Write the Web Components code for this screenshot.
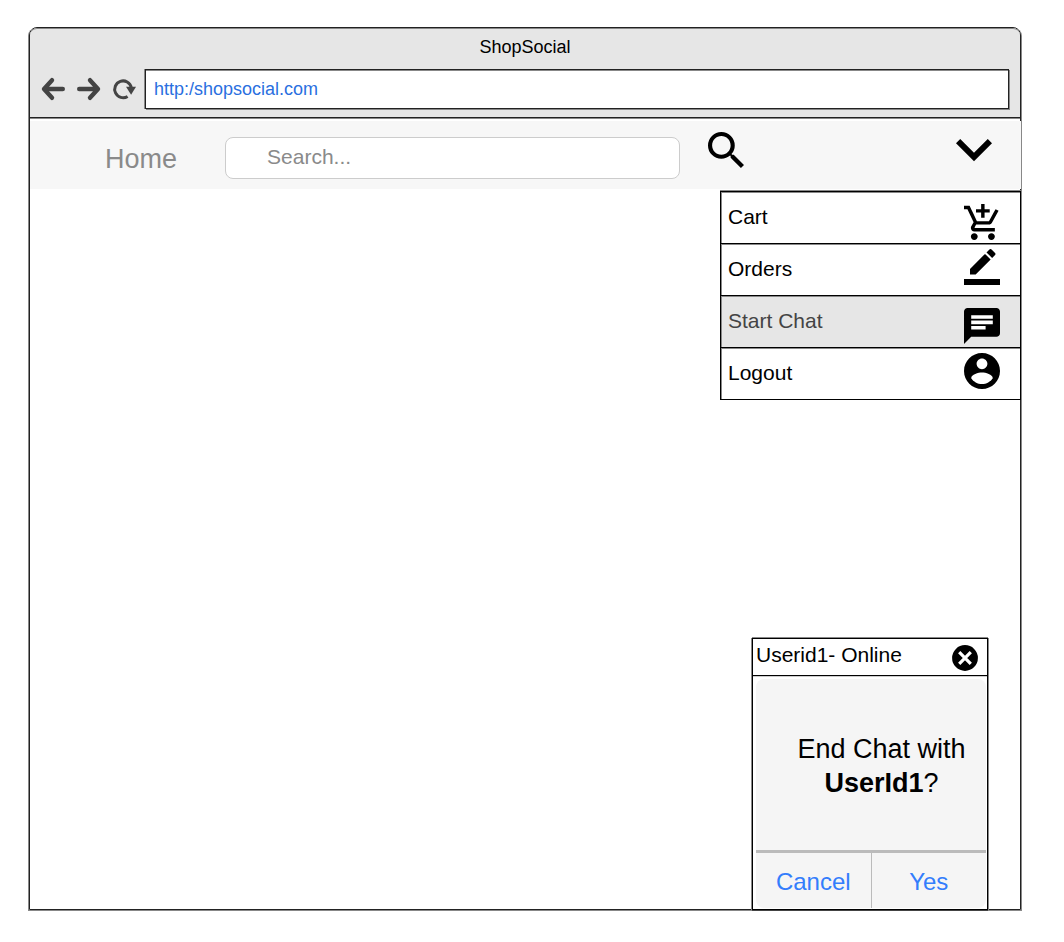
<!DOCTYPE html>
<html lang="en">
<head>
<meta charset="utf-8">
<meta name="viewport" content="width=device-width, initial-scale=1">
<title>ShopSocial</title>
<style>
  html { height: 100%; }
  body {
    margin: 0;
    min-height: 100%;
    box-sizing: border-box;
    padding: 27px 43px 32px 29px;
    display: flex;
    flex-direction: column;
    background: #fff;
    color: #000;
    font-family: "Liberation Sans", Arial, Helvetica, sans-serif;
    --ink: #222;
    --soft: #888;
  }
  browser-window { flex: 1; }
</style>
</head>
<body>
<browser-window heading="ShopSocial" address="http:/shopsocial.com">
  <site-nav></site-nav>
  <page-body>
    <account-menu>
      <menu-entry label="Cart" icon="cart" low></menu-entry>
      <menu-entry label="Orders" icon="edit"></menu-entry>
      <menu-entry label="Start Chat" icon="chat" low active></menu-entry>
      <menu-entry label="Logout" icon="user"></menu-entry>
    </account-menu>
    <chat-window heading="Userid1- Online">End Chat with <b>UserId1</b>?</chat-window>
  </page-body>
</browser-window>

<script>
const ICONS = {
  search: ['3 3 17.49 17.49', '<path d="M15.5 14h-.79l-.28-.27A6.47 6.47 0 0 0 16 9.5 6.5 6.5 0 1 0 9.5 16c1.61 0 3.09-.59 4.23-1.57l.27.28v.79l5 4.99L20.49 19l-4.99-5zm-6 0C7.01 14 5 11.99 5 9.5S7.01 5 9.5 5 14 7.01 14 9.5 11.99 14 9.5 14z"/>'],
  down: ['6 5.5 12 12', '<path d="M7.41 7.84L12 12.42l4.59-4.58L18 9.25l-6 6-6-6z"/>'],
  cart: ['1 1 21 21', '<path d="M11 9h2V6h3V4h-3V1h-2v3H8v2h3v3zm-4 9c-1.1 0-1.99.9-1.99 2S5.9 22 7 22s2-.9 2-2-.9-2-2-2zm10 0c-1.1 0-1.99.9-1.99 2s.89 2 1.99 2 2-.9 2-2-.9-2-2-2zm-9.83-3.25l.03-.12.9-1.63h7.45c.75 0 1.41-.41 1.75-1.03l3.86-7.01L19.42 4h-.01l-1.1 2-2.76 5H8.53l-.13-.27L6.16 6l-.95-2-.94-2H1v2h2l3.6 7.59-1.35 2.45c-.16.28-.25.61-.25.96 0 1.1.9 2 2 2h12v-2H7.42c-.13 0-.25-.11-.25-.25z"/>'],
  edit: ['0 0 24 24', '<path d="M17.75 7L14 3.25l-10 10V17h3.75l10-10zm2.96-2.96c.39-.39.39-1.02 0-1.41L18.37.29c-.39-.39-1.02-.39-1.41 0L15 2.25 18.75 6l1.96-1.96zM0 20h24v4H0z"/>'],
  chat: ['2 2 20 20', '<path fill="#fff" d="M5 5h14v10H5z"/><path d="M20 2H4c-1.1 0-1.99.9-1.99 2L2 22l4-4h14c1.1 0 2-.9 2-2V4c0-1.1-.9-2-2-2zM6 9h12v2H6V9zm8 5H6v-2h8v2zm4-6H6V6h12v2z"/>'],
  user: ['2 2 20 20', '<path d="M12 2C6.48 2 2 6.48 2 12s4.48 10 10 10 10-4.48 10-10S17.52 2 12 2zm0 3c1.66 0 3 1.34 3 3s-1.34 3-3 3-3-1.34-3-3 1.34-3 3-3zm0 14.2c-2.5 0-4.71-1.28-6-3.22.03-1.99 4-3.08 6-3.08 1.99 0 5.97 1.09 6 3.08-1.29 1.94-3.5 3.22-6 3.22z"/>'],
  close: ['0 0 26 26', '<circle cx="13" cy="13" r="12.9"/><path fill="none" stroke="#fff" stroke-width="3.2" d="M7.2 7.2l11.6 11.6M18.8 7.2L7.2 18.8"/>'],
  back: ['0 0 24 24', '<path fill="none" stroke="currentColor" stroke-width="4.4" stroke-linecap="round" stroke-linejoin="round" d="M11 3.2L3 12l8 8.8M4 12h17.8"/>'],
  forward: ['0 0 24 24', '<path fill="none" stroke="currentColor" stroke-width="4.4" stroke-linecap="round" stroke-linejoin="round" d="M13 3.2L21 12l-8 8.8M20 12H2.200"/>'],
  reload: ['0 0 24 24', '<path fill="none" stroke="currentColor" stroke-width="3" d="M15.6 19.4A8.4 8.4 0 1 1 19.3 10.5"/><path d="M14 9.8h10l-4.900 8z"/>']
};

class UiIcon extends HTMLElement {
  connectedCallback() {
    const [box, shape] = ICONS[this.getAttribute('name')];
    this.attachShadow({ mode: 'open' }).innerHTML = `
      <style>
        :host { display: block; flex: none; width: 36px; height: 36px; }
        svg { display: block; width: 100%; height: 100%; fill: currentColor; }
      </style>
      <svg viewBox="${box}" aria-hidden="true">${shape}</svg>`;
  }
}
customElements.define('ui-icon', UiIcon);

class BrowserWindow extends HTMLElement {
  connectedCallback() {
    this.attachShadow({ mode: 'open' }).innerHTML = `
      <style>
        :host {
          display: flex; flex-direction: column;
          border: 1px solid var(--ink);
          border-radius: 8px 8px 0 0;
          box-shadow: -1px 1px 0 var(--soft), 1px 1px 0 var(--soft);
        }
        header {
          padding: 8px 11px 8px 11px;
          background: #e6e6e6;
          border-top: 1px solid var(--soft);
          border-bottom: 1px solid var(--ink);
          border-radius: 7px 7px 0 0;
          box-shadow: 0 1px 0 var(--soft);
        }
        h1 { margin: 0 0 12px; font-size: 18px; line-height: 20px; font-weight: 400; text-align: center; }
        form { display: flex; align-items: center; }
        button {
          flex: none; margin: 0 12px 0 0; padding: 0; border: 0;
          background: none; color: #444;
        }
        button:nth-of-type(3) { margin-right: 9px; }
        button:nth-of-type(2) { margin-right: 11px; }
        button ui-icon { width: 24px; height: 24px; }
        input {
          flex: 1; min-width: 0; box-sizing: border-box; height: 40px;
          margin: 0; padding: 0 8px;
          border: 1px solid var(--ink); border-radius: 0;
          box-shadow: -1px 0 0 var(--soft), 1px 1px 0 var(--soft), inset 0 1px 0 var(--soft);
          background: #fff; color: #2a6fdf;
          font: 18px/20px "Liberation Sans", Arial, sans-serif;
          outline: 0;
        }
      </style>
      <header>
        <h1>${this.getAttribute('heading')}</h1>
        <form>
          <button type="button" aria-label="Back"><ui-icon name="back"></ui-icon></button>
          <button type="button" aria-label="Forward"><ui-icon name="forward"></ui-icon></button>
          <button type="button" aria-label="Reload"><ui-icon name="reload"></ui-icon></button>
          <input type="text" aria-label="Address" value="${this.getAttribute('address')}">
        </form>
      </header>
      <slot></slot>`;
  }
}
customElements.define('browser-window', BrowserWindow);

class SiteNav extends HTMLElement {
  connectedCallback() {
    this.attachShadow({ mode: 'open' }).innerHTML = `
      <style>
        :host { display: block; margin: 3px -1px 0 0; background: #f7f7f7; border-right: 1px solid #f7f7f7; }
        nav { display: flex; align-items: flex-start; height: 68px; padding: 0 28px 0 75px; }
        a { margin: 23px 48px 0 0; font-size: 27px; line-height: 30px; color: #8a8a8a; text-decoration: none; }
        form { flex: 1; display: flex; align-items: flex-start; min-width: 0; }
        input {
          flex: 1; min-width: 0; box-sizing: border-box; height: 42px;
          margin: 16px 28px 0 0; padding: 0 12px 2px 41px;
          border: 1px solid #ccc; border-radius: 8px; background: #fff;
          font: 21px/24px "Liberation Sans", Arial, sans-serif; color: #333;
          outline: 0;
        }
        input::placeholder { color: #8a8a8a; opacity: 1; }
        button { flex: none; margin: 11px 0 0; padding: 0; border: 0; background: none; color: #000; }
        .more { margin-left: 212px; }
      </style>
      <nav>
        <a href="#home">Home</a>
        <form role="search">
          <input type="search" aria-label="Search" placeholder="Search...">
          <button type="button" aria-label="Search"><ui-icon name="search"></ui-icon></button>
        </form>
        <button class="more" type="button" aria-label="Account menu" aria-expanded="true"><ui-icon name="down"></ui-icon></button>
      </nav>`;
  }
}
customElements.define('site-nav', SiteNav);

class PageBody extends HTMLElement {
  connectedCallback() {
    this.attachShadow({ mode: 'open' }).innerHTML = `
      <style>
        :host {
          flex: 1; display: flex; flex-direction: column;
          justify-content: space-between; align-items: flex-end; gap: 24px;
        }
      </style>
      <slot></slot>`;
  }
}
customElements.define('page-body', PageBody);

class AccountMenu extends HTMLElement {
  connectedCallback() {
    this.attachShadow({ mode: 'open' }).innerHTML = `
      <style>
        :host {
          display: block; box-sizing: border-box; width: 301px; margin: 2px -1px 0 0;
          border: solid #000; border-width: 0 1px 1px; background: #fff;
          box-shadow: 0 -1px 0 var(--soft), 1px 0 0 var(--soft);
        }
      </style>
      <div role="menu"><slot></slot></div>`;
  }
}
customElements.define('account-menu', AccountMenu);

class MenuEntry extends HTMLElement {
  connectedCallback() {
    this.attachShadow({ mode: 'open' }).innerHTML = `
      <style>
        :host { display: block; border-top: 1px solid #000; box-shadow: inset 1px 1px 0 var(--soft); }
        a {
          display: flex; align-items: flex-start; justify-content: space-between;
          height: 51px; padding: 0 20px 0 7px;
          color: #000; text-decoration: none; font-size: 21px; line-height: 24px;
        }
        span { margin-top: 13px; }
        ui-icon { margin-top: 5px; color: #000; }
        :host([low]) ui-icon { margin-top: 12px; }
        :host([active]) { background: #e6e6e6; }
        :host([active]) a { color: #444; }
      </style>
      <a href="#${this.getAttribute('icon')}" role="menuitem">
        <span>${this.getAttribute('label')}</span>
        <ui-icon name="${this.getAttribute('icon')}"></ui-icon>
      </a>`;
  }
}
customElements.define('menu-entry', MenuEntry);

class ChatWindow extends HTMLElement {
  connectedCallback() {
    this.attachShadow({ mode: 'open' }).innerHTML = `
      <style>
        :host {
          display: block; box-sizing: border-box; width: 236px; margin: 0 32px -1px 0;
          border: 1px solid #000; background: #fff;
          box-shadow: -1px 0 0 var(--soft), 1px 0 0 var(--soft), 0 -1px 0 var(--soft), 0 1px 0 #444;
        }
        header {
          display: flex; align-items: flex-start; justify-content: space-between;
          padding: 4px 9px 6px 3px; border-bottom: 1px solid #000;
          box-shadow: 0 1px 0 #ccc;
        }
        h2 { margin: 0; font-size: 21px; line-height: 24px; font-weight: 400; }
        header button { margin: 2px 0 -2px; padding: 0; border: 0; background: none; color: #000; }
        header ui-icon { width: 26px; height: 26px; }
        section { padding: 3px 1px 1px 3px; }
        .panel { overflow: hidden; border-radius: 8px; background: #f5f5f5; }
        p { margin: 0; padding: 53px 10px 50px 31px; font-size: 27px; line-height: 34px; text-align: center; }
        .actions { display: flex; border-top: 3px solid #bbb; }
        .actions button {
          flex: 1; height: 55px; margin: 0; padding: 2px 0 0; border: 0; background: none;
          color: #337dfc; font: 24px/28px "Liberation Sans", Arial, sans-serif;
        }
        .actions button + button { border-left: 1px solid #bbb; }
      </style>
      <header>
        <h2>${this.getAttribute('heading')}</h2>
        <button type="button" aria-label="Close chat"><ui-icon name="close"></ui-icon></button>
      </header>
      <section>
        <div class="panel">
          <p><slot></slot></p>
          <div class="actions">
            <button type="button">Cancel</button>
            <button type="button">Yes</button>
          </div>
        </div>
      </section>`;
  }
}
customElements.define('chat-window', ChatWindow);
</script>
</body>
</html>
